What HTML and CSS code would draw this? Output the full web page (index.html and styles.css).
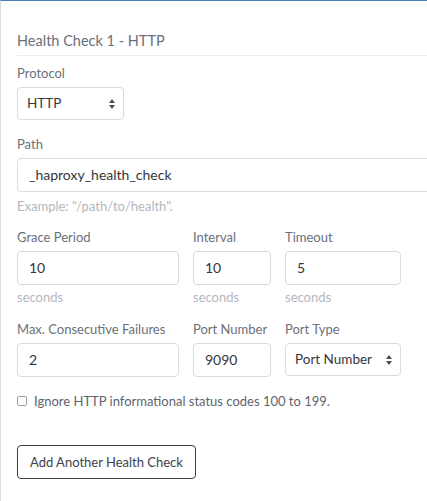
FILE: index.html
```html
<!DOCTYPE html>
<html>
<head>
<meta charset="utf-8">
<link rel="stylesheet" href="styles.css">
</head>
<body>
<div class="panel">
  <h3 class="title">Health Check 1 - HTTP</h3>

  <div class="group">
    <div class="label">Protocol</div>
    <div class="select protocol">
      <span>HTTP</span>
      <svg class="arrows" width="6" height="10" viewBox="0 0 6 10"><path d="M3 0 L6 4 L0 4 Z M0 6 L6 6 L3 10 Z" fill="#4a4f57"/></svg>
    </div>
  </div>

  <div class="group">
    <div class="label">Path</div>
    <div class="input wide">_haproxy_health_check</div>
    <div class="help">Example: "/path/to/health".</div>
  </div>

  <div class="row">
    <div class="col c1">
      <div class="label">Grace Period</div>
      <div class="input">10</div>
      <div class="help">seconds</div>
    </div>
    <div class="col c2">
      <div class="label">Interval</div>
      <div class="input">10</div>
      <div class="help">seconds</div>
    </div>
    <div class="col c3">
      <div class="label">Timeout</div>
      <div class="input">5</div>
      <div class="help">seconds</div>
    </div>
  </div>

  <div class="row row2">
    <div class="col c1">
      <div class="label">Max. Consecutive Failures</div>
      <div class="input">2</div>
    </div>
    <div class="col c2">
      <div class="label">Port Number</div>
      <div class="input">9090</div>
    </div>
    <div class="col c3">
      <div class="label">Port Type</div>
      <div class="select">
        <span>Port Number</span>
        <svg class="arrows" width="6" height="10" viewBox="0 0 6 10"><path d="M3 0 L6 4 L0 4 Z M0 6 L6 6 L3 10 Z" fill="#4a4f57"/></svg>
      </div>
    </div>
  </div>

  <div class="check">
    <span class="box"></span>
    <span class="check-text">Ignore HTTP informational status codes 100 to 199.</span>
  </div>

  <div class="btn">Add Another Health Check</div>
</div>
</body>
</html>
```
FILE: styles.css
```css
html, body {
  margin: 0;
  padding: 0;
  overflow: hidden;
  background: #fff;
}
body {
  font-family: Lato, "Liberation Sans", sans-serif;
  width: 427px;
  height: 501px;
}
.panel {
  border-top: 1px solid #4a7cba;
  border-left: 1px solid #dcdcdc;
  padding-left: 16px;
  width: 427px;
  height: 501px;
  box-sizing: border-box;
  overflow: hidden;
}
.title {
  margin: 30px -40px 0 0;
  padding-bottom: 4px;
  border-bottom: 1px solid #ececec;
  font-size: 14.5px;
  line-height: 20px;
  font-weight: 400;
  color: #6b7079;
}
.group {
  margin-top: 8px;
}
.group + .group {
  margin-top: 15px;
}
.label {
  font-size: 13px;
  line-height: 18px;
  color: #6b7079;
  margin-bottom: 5px;
  white-space: nowrap;
}
.input, .select {
  height: 34px;
  box-sizing: border-box;
  border: 1px solid #d9dbde;
  border-radius: 4px;
  font-size: 14px;
  line-height: 32px;
  color: #33373d;
  padding: 0 11px;
  white-space: nowrap;
}
.input.wide {
  margin-right: -40px;
}
.select {
  position: relative;
  height: 33px;
  line-height: 31px;
  padding-left: 9px;
  font-size: 13.5px;
}
.select.protocol {
  width: 107px;
}
.arrows {
  position: absolute;
  right: 8px;
  top: 11px;
}
.help {
  font-size: 13px;
  line-height: 18px;
  color: #b3b7bd;
  margin-top: 5px;
}
.row {
  display: flex;
  gap: 14px;
  margin-top: 13px;
}
.row2 {
  margin-top: 14px;
}
.col .help {
  margin-top: 3px;
}
.c1 { width: 162px; }
.c2 { width: 78px; }
.c3 { width: 116px; }
.check {
  display: flex;
  align-items: center;
  margin-top: 15px;
  font-size: 13px;
  line-height: 18px;
  color: #5f646c;
}
.box {
  width: 10px;
  height: 10px;
  border: 1px solid #9a9ea4;
  border-radius: 2px;
  box-sizing: border-box;
  margin-right: 7px;
}
.btn {
  display: inline-block;
  margin-top: 35px;
  height: 34px;
  box-sizing: border-box;
  border: 1px solid #3a3f47;
  border-radius: 4px;
  padding: 0 12px;
  font-size: 13px;
  line-height: 32px;
  color: #3d424a;
}
```
